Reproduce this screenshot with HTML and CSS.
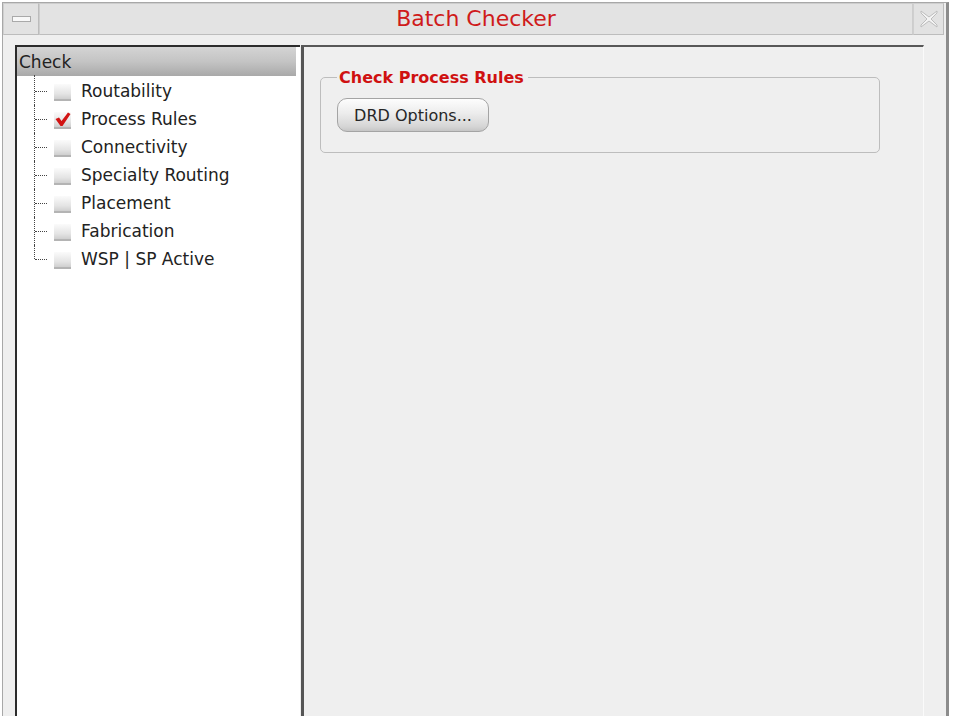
FILE: index.html
```html
<!DOCTYPE html>
<html>
<head>
<meta charset="utf-8">
<title>Batch Checker</title>
<link rel="stylesheet" href="styles.css">
</head>
<body>
<div class="window">
  <div class="titlebar">
    <div class="tb-btn tb-min"><span class="dash"></span></div>
    <div class="title">Batch Checker</div>
    <div class="tb-btn tb-close">
      <svg width="22" height="22" viewBox="0 0 22 22"><path d="M3 3 L11 9 L19 3 L19 5 L13 11 L19 17 L19 19 L11 13 L3 19 L3 17 L9 11 L3 5 Z" fill="#f4f4f4" stroke="#bdbdbd" stroke-width="1"/></svg>
    </div>
  </div>
  <div class="content">
    <div class="tree-panel">
      <div class="tree-header">Check</div>
      <ul class="tree">
        <li class="row"><span class="conn"></span><span class="cb"></span><span class="lbl">Routability</span></li>
        <li class="row"><span class="conn"></span><span class="cb checked"><svg width="17" height="17" viewBox="0 0 17 17"><path d="M1.5 8 L5 6.5 L7.5 10 L14 1.5 L16.5 3 L8.5 15 L6.5 15 Z" fill="#d21414"/></svg></span><span class="lbl">Process Rules</span></li>
        <li class="row"><span class="conn"></span><span class="cb"></span><span class="lbl">Connectivity</span></li>
        <li class="row"><span class="conn"></span><span class="cb"></span><span class="lbl">Specialty Routing</span></li>
        <li class="row"><span class="conn"></span><span class="cb"></span><span class="lbl">Placement</span></li>
        <li class="row"><span class="conn"></span><span class="cb"></span><span class="lbl">Fabrication</span></li>
        <li class="row last"><span class="conn"></span><span class="cb"></span><span class="lbl">WSP | SP Active</span></li>
      </ul>
    </div>
    <div class="main-panel">
      <fieldset class="group">
        <legend>Check Process Rules</legend>
        <button class="btn">DRD Options...</button>
      </fieldset>
    </div>
  </div>
</div>
</body>
</html>
```

FILE: styles.css
```css
html, body {
  margin: 0;
  padding: 0;
  background: #ffffff;
  overflow: hidden;
  height: 716px;
}
body {
  font-family: "DejaVu Sans", "Liberation Sans", sans-serif;
  font-size: 16px;
  color: #222;
}
.window {
  margin: 2px 0 0 2px;
  width: 943px;
  height: 760px;
  background: #efefef;
  border-left: 1px solid #a8a8a8;
  border-top: 1px solid #a8a8a8;
  border-right: 3px solid #8c8c8c;
}
.titlebar {
  display: flex;
  height: 32px;
}
.tb-btn {
  display: flex;
  align-items: center;
  justify-content: center;
  background: #e2e2e2;
  border: 1px solid #cfcfcf;
  border-right-color: #bcbcbc;
  border-bottom-color: #bcbcbc;
  box-sizing: border-box;
  height: 32px;
}
.tb-min {
  width: 36px;
}
.dash {
  display: block;
  width: 17px;
  height: 4px;
  background: #f8f8f8;
  border: 1px solid #a9a9a9;
}
.title {
  flex: 1;
  height: 32px;
  box-sizing: border-box;
  background: #e3e3e3;
  border: 1px solid #cdcdcd;
  border-bottom-color: #bdbdbd;
  color: #cf1b1b;
  font-size: 22px;
  line-height: 30px;
  text-align: center;
}
.tb-close {
  width: 31px;
  margin-right: 2px;
}
.content {
  display: flex;
  padding: 10px 0 0 12px;
}
.tree-panel {
  width: 283px;
  height: 700px;
  background: #ffffff;
  border-top: 2px solid #2b2b2b;
  border-left: 2px solid #2b2b2b;
}
.tree-header {
  height: 29px;
  margin-right: 4px;
  padding-left: 2px;
  line-height: 30px;
  font-size: 17px;
  background: linear-gradient(#d4d4d4, #c4c4c4 50%, #a9a9a9);
  color: #222;
}
.tree {
  list-style: none;
  margin: 0;
  padding: 1px 0 0 0;
}
.row {
  display: flex;
  align-items: center;
  height: 28px;
}
.conn {
  position: relative;
  align-self: stretch;
  width: 20px;
  margin-left: 17px;
}
.conn::before {
  content: "";
  position: absolute;
  left: 0;
  top: 0;
  bottom: 0;
  border-left: 1px dotted #444;
}
.row:first-child .conn::before {
  top: -2px;
}
.row.last .conn::before {
  bottom: 50%;
}
.conn::after {
  content: "";
  position: absolute;
  left: 1px;
  top: 50%;
  width: 12px;
  border-top: 1px dotted #444;
}
.cb {
  width: 17px;
  height: 17px;
  margin-top: 2px;
  box-sizing: border-box;
  background: linear-gradient(#fbfbfb, #e4e4e4 65%, #cfcfcf);
  border-bottom: 2px solid #b4b4b4;
  display: flex;
  align-items: flex-end;
  justify-content: center;
}
.cb svg {
  display: block;
  margin-bottom: -1px;
}
.lbl {
  margin-left: 10px;
  font-size: 17px;
  color: #222;
}
.main-panel {
  width: 619px;
  height: 700px;
  border-top: 2px solid #585858;
  border-left: 3px solid #555;
  border-right: 1px solid #fafafa;
  margin-left: 1px;
}
.group {
  margin: 21px 0 0 16px;
  width: 560px;
  height: 85px;
  box-sizing: border-box;
  border: 1px solid #bdbdbd;
  border-radius: 5px;
  padding: 13px 0 0 16px;
}
.group legend {
  color: #cf1111;
  font-weight: bold;
  font-size: 16px;
  padding: 0 4px 0 2px;
  margin-left: 0;
}
.btn {
  display: block;
  margin-top: -2px;
  width: 152px;
  height: 34px;
  border: 1px solid #a4a4a4;
  border-radius: 10px;
  background: linear-gradient(#fdfdfd, #ececec 45%, #d6d6d6 85%, #c6c6c6);
  font-family: "DejaVu Sans", "Liberation Sans", sans-serif;
  font-size: 16px;
  color: #262626;
  padding: 0;
}
```
